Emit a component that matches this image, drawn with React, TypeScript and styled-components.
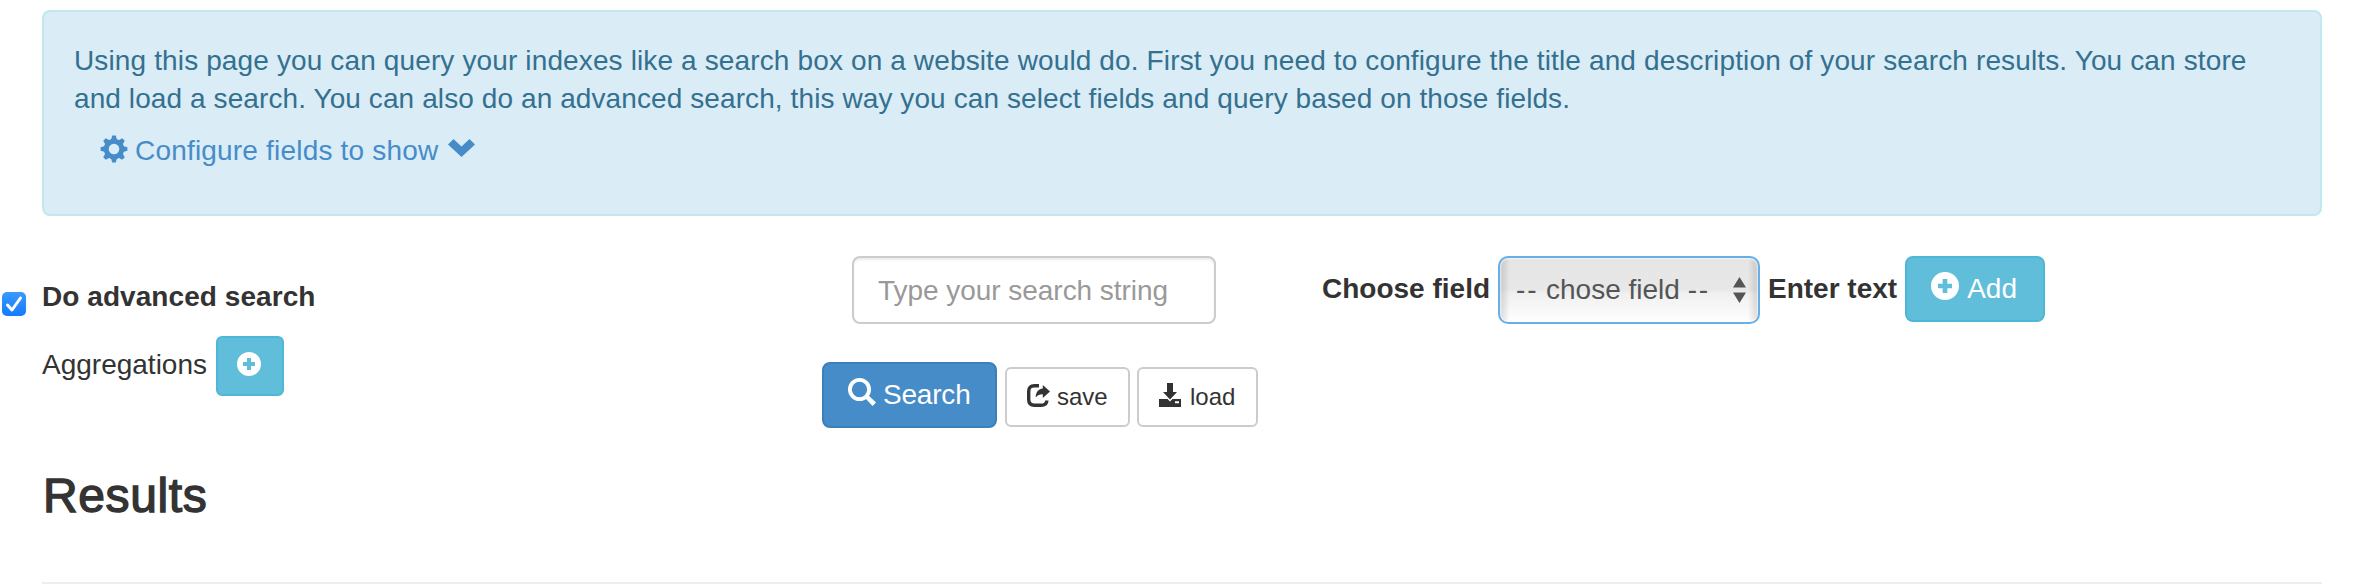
import React from "react";
import styled, { createGlobalStyle } from "styled-components";

const Global = createGlobalStyle`
  *, *::before, *::after { box-sizing: border-box; }
  body { margin: 0; background: #fff; color: #333; font: 28px/38px "Liberation Sans", Arial, sans-serif; overflow: hidden; }
`;

const Page = styled.main`
  height: 586px;
  padding: 10px 32px 0 42px;
`;

const Alert = styled.section`
  height: 206px;
  padding: 30px 30px 0 30px;
  border: 2px solid #bfe8f0;
  border-radius: 8px;
  background: #daecf6;
  color: #34708f;
`;

const Line = styled.p<{ $track?: number }>`
  margin: 0;
  white-space: nowrap;
  letter-spacing: ${(p) => p.$track ?? 0}px;
`;

const ConfigureLink = styled.a`
  display: flex;
  align-items: center;
  margin: 14px 0 0 26px;
  color: #468cc9;
`;

const Columns = styled.div`
  display: grid;
  grid-template-columns: 780px 500px 1fr;
  margin-top: 40px;
  height: 172px;
`;

const Column = styled.div`
  display: flex;
  flex-direction: column;
  align-items: flex-start;
`;

const Row = styled.div<{ $top?: number; $left?: number; $gap?: number }>`
  display: flex;
  align-items: flex-start;
  gap: ${(p) => p.$gap ?? 0}px;
  margin-top: ${(p) => p.$top ?? 0}px;
  margin-left: ${(p) => p.$left ?? 0}px;
`;

const Text = styled.span<{ $bold?: boolean; $track?: number; $top?: number }>`
  white-space: nowrap;
  line-height: 38px;
  margin-top: ${(p) => p.$top ?? 0}px;
  font-weight: ${(p) => (p.$bold ? 700 : 400)};
  letter-spacing: ${(p) => p.$track ?? 0}px;
`;

const Dashes = styled.span`
  letter-spacing: 1.8px;
`;

const CheckBox = styled.span`
  display: flex;
  width: 24px;
  height: 24px;
  margin: 14px 16px 0 0;
  border-radius: 5px;
  background: linear-gradient(#3b99fc, #147bfe);
`;

const tones = {
  info: ["#61bedb", "#4eb6d7", "#fff"],
  primary: ["#468cc9", "#3b7fbb", "#fff"],
  plain: ["#fff", "#ccc", "#333"],
};

const Button = styled.button<{ $tone: keyof typeof tones; $w: number; $h: number; $small?: boolean }>`
  display: flex;
  align-items: flex-start;
  flex: none;
  width: ${(p) => p.$w}px;
  height: ${(p) => p.$h}px;
  padding: 0;
  border: 2px solid ${(p) => tones[p.$tone][1]};
  border-radius: ${(p) => (p.$small ? 6 : 8)}px;
  background: ${(p) => tones[p.$tone][0]};
  color: ${(p) => tones[p.$tone][2]};
  font: inherit;
  font-size: ${(p) => (p.$tone === "plain" ? 24 : 28)}px;
`;

const PlainButtons = styled.div`
  display: flex;
  gap: 7px;
  padding-top: 5px;
`;

const SearchInput = styled.input`
  width: 364px;
  height: 68px;
  padding: 2px 24px 0;
  border: 2px solid #ccc;
  border-radius: 8px;
  box-shadow: inset 0 2px 2px rgba(0, 0, 0, 0.075);
  font: inherit;
  &::placeholder { color: #999; opacity: 1; letter-spacing: -0.04px; }
`;

const Select = styled.div`
  display: flex;
  align-items: flex-start;
  justify-content: space-between;
  width: 262px;
  height: 68px;
  padding: 13px 12px 0 16px;
  margin: 0 8px;
  border: 2px solid #66afe9;
  border-radius: 10px;
  background:
    linear-gradient(90deg, rgba(0, 0, 0, 0.14), transparent 10px, transparent calc(100% - 10px), rgba(0, 0, 0, 0.14)),
    linear-gradient(#e5e5e5, #e8e8e8 50%, #efefef 54%, #fff);
  box-shadow: inset 0 0 2px 1px rgba(255, 255, 255, 0.7);
  color: #555;
`;

const AddSlot = styled.div`
  margin-left: 8px;
`;

const Heading = styled.h2`
  margin: 0;
  padding: 41px 0 0 1px;
  height: 154px;
  font-size: 48px;
  line-height: 54px;
  font-weight: 400;
  letter-spacing: 0.6px;
  -webkit-text-stroke: 1.4px #333;
`;

const Rule = styled.hr`
  margin: 0;
  border: 0;
  height: 2px;
  background: #eee;
`;

const Svg = styled.svg<{ $m?: string }>`
  display: block;
  flex: none;
  margin: ${(p) => p.$m ?? "0"};
  fill: currentColor;
`;

type IconProps = { size: number; m?: string };

const Plus = ({ size, m }: IconProps) => (
  <Svg $m={m} width={size} height={size} viewBox="0 0 24 24">
    <path fillRule="evenodd" d="M12 0a12 12 0 1 0 0 24a12 12 0 0 0 0-24zM10 6h4v4h4v4h-4v4h-4v-4H6v-4h4z" />
  </Svg>
);

const teeth = [0, 45, 90, 135, 180, 225, 270, 315];

const Gear = ({ size, m }: IconProps) => (
  <Svg $m={m} width={size} height={size} viewBox="0 0 28 28">
    <circle cx="14" cy="14" r="7.8" fill="none" stroke="currentColor" strokeWidth="5" />
    {teeth.map((a) => (
      <path key={a} d="M11 5L12.2.6h3.6L17 5z" transform={`rotate(${a} 14 14)`} />
    ))}
  </Svg>
);

const Magnifier = () => (
  <Svg $m="14px 7px 0 24px" width="28" height="28" viewBox="0 0 28 28">
    <circle cx="11.5" cy="11.5" r="9.6" fill="none" stroke="currentColor" strokeWidth="3.8" />
    <path d="M16.8 19.8L19.8 16.8L28 24.6L24.6 28z" />
  </Svg>
);

const Share = () => (
  <Svg $m="15px 7px 0 20px" width="23" height="23" viewBox="0 0 23 23">
    <path
      d="M12 1.7H7.5Q1.7 1.7 1.7 7.5V15.5Q1.7 21.3 7.5 21.3H14Q19.8 21.3 19.8 16.5"
      fill="none"
      stroke="currentColor"
      strokeWidth="3.4"
    />
    <path d="M15.8 1L23 7.6L15.8 14V10.3C12.5 10.3 10.5 11.2 8.7 13.4C8.9 8.5 11 5.2 15.8 4.6z" />
  </Svg>
);

const Download = () => (
  <Svg $m="14px 9px 0 20px" width="22" height="24" viewBox="0 0 22 24">
    <path d="M8 0h6v9h4l-7 7.5L4 9h4z" />
    <path fillRule="evenodd" d="M0 16h8.5l2.5 2.5L13.5 16H22v8H0zM16 18.2v2h4v-2z" />
  </Svg>
);

export default function App() {
  return (
    <>
      <Global />
      <Page>
        <Alert>
          <Line $track={0.132}>
            Using this page you can query your indexes like a search box on a website would do. First you need to
            configure the title and description of your search results. You can store
          </Line>
          <Line $track={0.094}>
            and load a search. You can also do an advanced search, this way you can select fields and query based on
            those fields.
          </Line>
          <ConfigureLink>
            <Gear size={28} m="-5px 7px 0 0" />
            <Text $track={0.19}>Configure fields to show</Text>
            <Svg $m="-6px 0 0 10px" width="27" height="18" viewBox="0 0 27 18">
              <path d="M0 5.5L5.5 0L13.5 7.5L21.5 0L27 5.5L13.5 18z" />
            </Svg>
          </ConfigureLink>
        </Alert>
        <Columns>
          <Column>
            <Row $top={22} $left={-40}>
              <CheckBox role="checkbox" aria-checked="true">
                <Svg width="24" height="24" viewBox="0 0 24 24">
                  <path d="M5.5 13l4.5 5L18.5 6" fill="none" stroke="#fff" strokeWidth="3" strokeLinecap="round" strokeLinejoin="round" />
                </Svg>
              </CheckBox>
              <Text $bold $track={0.06}>Do advanced search</Text>
            </Row>
            <Row $top={20} $gap={9}>
              <Text $top={10}>Aggregations</Text>
              <Button $tone="info" $w={68} $h={60} $small aria-label="Add aggregation">
                <Plus size={24} m="14px 0 0 19px" />
              </Button>
            </Row>
          </Column>
          <Column>
            <Row $left={30}>
              <SearchInput placeholder="Type your search string" />
            </Row>
            <Row $top={38} $gap={8}>
              <Button $tone="primary" $w={175} $h={66}>
                <Magnifier />
                <Text $top={12} $track={-0.2}>Search</Text>
              </Button>
              <PlainButtons>
                <Button $tone="plain" $w={125} $h={60} $small>
                  <Share />
                  <Text $top={9}>save</Text>
                </Button>
                <Button $tone="plain" $w={121} $h={60} $small>
                  <Download />
                  <Text $top={9}>load</Text>
                </Button>
              </PlainButtons>
            </Row>
          </Column>
          <Row>
            <Text $bold $top={14}>Choose field</Text>
            <Select>
              <Text>
                <Dashes>--</Dashes> chose field <Dashes>--</Dashes>
              </Text>
              <Svg $m="6px 0 0 0" width="13" height="26" viewBox="0 0 13 26">
                <path d="M6.5 0L13 10.5H0zM6.5 26L0 15.5H13z" />
              </Svg>
            </Select>
            <Text $bold $top={14}>Enter text</Text>
            <AddSlot>
              <Button $tone="info" $w={140} $h={66}>
                <Plus size={28} m="14px 8px 0 24px" />
                <Text $top={12}>Add</Text>
              </Button>
            </AddSlot>
          </Row>
        </Columns>
        <Heading>Results</Heading>
        <Rule />
      </Page>
    </>
  );
}
